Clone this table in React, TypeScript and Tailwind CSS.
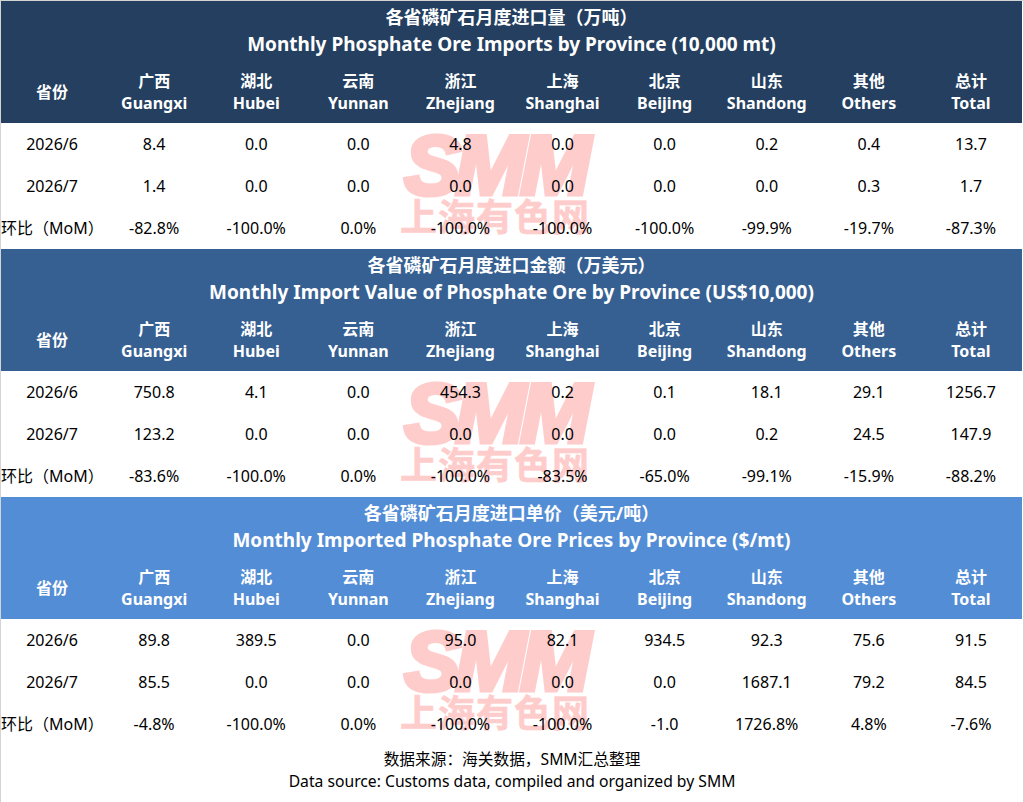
import React from 'react';

const FONT = '"Noto Sans", "Noto Sans CJK SC", sans-serif';

const COLUMNS: [string, string][] = [
  ['广西', 'Guangxi'],
  ['湖北', 'Hubei'],
  ['云南', 'Yunnan'],
  ['浙江', 'Zhejiang'],
  ['上海', 'Shanghai'],
  ['北京', 'Beijing'],
  ['山东', 'Shandong'],
  ['其他', 'Others'],
  ['总计', 'Total'],
];

interface Section {
  titleCn: string;
  titleEn: string;
  headerBg: string;
  rows: { label: string; values: string[] }[];
}

const SECTIONS: Section[] = [
  {
    titleCn: '各省磷矿石月度进口量（万吨）',
    titleEn: 'Monthly Phosphate Ore Imports by Province (10,000 mt)',
    headerBg: 'bg-[#243f60]',
    rows: [
      { label: '2026/6', values: ['8.4', '0.0', '0.0', '4.8', '0.0', '0.0', '0.2', '0.4', '13.7'] },
      { label: '2026/7', values: ['1.4', '0.0', '0.0', '0.0', '0.0', '0.0', '0.0', '0.3', '1.7'] },
      { label: '环比（MoM）', values: ['-82.8%', '-100.0%', '0.0%', '-100.0%', '-100.0%', '-100.0%', '-99.9%', '-19.7%', '-87.3%'] },
    ],
  },
  {
    titleCn: '各省磷矿石月度进口金额（万美元）',
    titleEn: 'Monthly Import Value of Phosphate Ore by Province (US$10,000)',
    headerBg: 'bg-[#366092]',
    rows: [
      { label: '2026/6', values: ['750.8', '4.1', '0.0', '454.3', '0.2', '0.1', '18.1', '29.1', '1256.7'] },
      { label: '2026/7', values: ['123.2', '0.0', '0.0', '0.0', '0.0', '0.0', '0.2', '24.5', '147.9'] },
      { label: '环比（MoM）', values: ['-83.6%', '-100.0%', '0.0%', '-100.0%', '-83.5%', '-65.0%', '-99.1%', '-15.9%', '-88.2%'] },
    ],
  },
  {
    titleCn: '各省磷矿石月度进口单价（美元/吨）',
    titleEn: 'Monthly Imported Phosphate Ore Prices by Province ($/mt)',
    headerBg: 'bg-[#538dd5]',
    rows: [
      { label: '2026/6', values: ['89.8', '389.5', '0.0', '95.0', '82.1', '934.5', '92.3', '75.6', '91.5'] },
      { label: '2026/7', values: ['85.5', '0.0', '0.0', '0.0', '0.0', '0.0', '1687.1', '79.2', '84.5'] },
      { label: '环比（MoM）', values: ['-4.8%', '-100.0%', '0.0%', '-100.0%', '-100.0%', '-1.0', '1726.8%', '4.8%', '-7.6%'] },
    ],
  },
];

// SMM watermark sits behind the numbers in every table body
function Watermark() {
  return (
    <div className="pointer-events-none absolute left-[394px] top-[10px] flex w-[200px] flex-col items-center text-[#ffcccc]">
      <span
        className="block text-[84px] font-bold italic leading-[64px] tracking-[-5px] [-webkit-text-stroke:5px_#ffcccc]"
        style={{ fontFamily: '"Liberation Sans", Arial, sans-serif' }}
      >
        SMM
      </span>
      <span className="mt-[2px] block text-[37px] font-bold leading-[36px] tracking-[1px] [-webkit-text-stroke:0.6px_#ffcccc]">
        上海有色网
      </span>
    </div>
  );
}

function Table({ section }: { section: Section }) {
  return (
    <div>
      <div className={`${section.headerBg} h-[122px] pt-[3px] text-white`}>
        <div className="text-center text-[18px] font-bold leading-[27px]">{section.titleCn}</div>
        <div className="text-center text-[19px] font-bold leading-[27px]">{section.titleEn}</div>
        <div className="mt-[12px] grid grid-cols-10 text-[16px] font-bold leading-[22px]">
          <div className="flex items-center justify-center">省份</div>
          {COLUMNS.map(([cn, en]) => (
            <div key={en} className="flex flex-col items-center">
              <span>{cn}</span>
              <span>{en}</span>
            </div>
          ))}
        </div>
      </div>
      <div className="relative h-[126px] bg-white">
        <Watermark />
        <div className="relative">
          {section.rows.map((row) => (
            <div key={row.label} className="grid h-[42px] grid-cols-10 items-center text-[16px] text-black">
              <div className="whitespace-nowrap text-center">{row.label}</div>
              {row.values.map((v, i) => (
                <div key={i} className="text-center">
                  {v}
                </div>
              ))}
            </div>
          ))}
        </div>
      </div>
    </div>
  );
}

export default function App() {
  return (
    <div className="h-[802px] w-[1024px] overflow-hidden border border-b-0 border-[#d4d4d4] bg-white" style={{ fontFamily: FONT }}>
      <div className="mr-[1px]">
        {SECTIONS.map((s) => (
          <Table key={s.titleEn} section={s} />
        ))}
      </div>
      <div className="pt-[3px] text-center text-[15.7px] leading-[22px] text-black">
        <div>数据来源：海关数据，SMM汇总整理</div>
        <div>Data source: Customs data, compiled and organized by SMM</div>
      </div>
    </div>
  );
}
